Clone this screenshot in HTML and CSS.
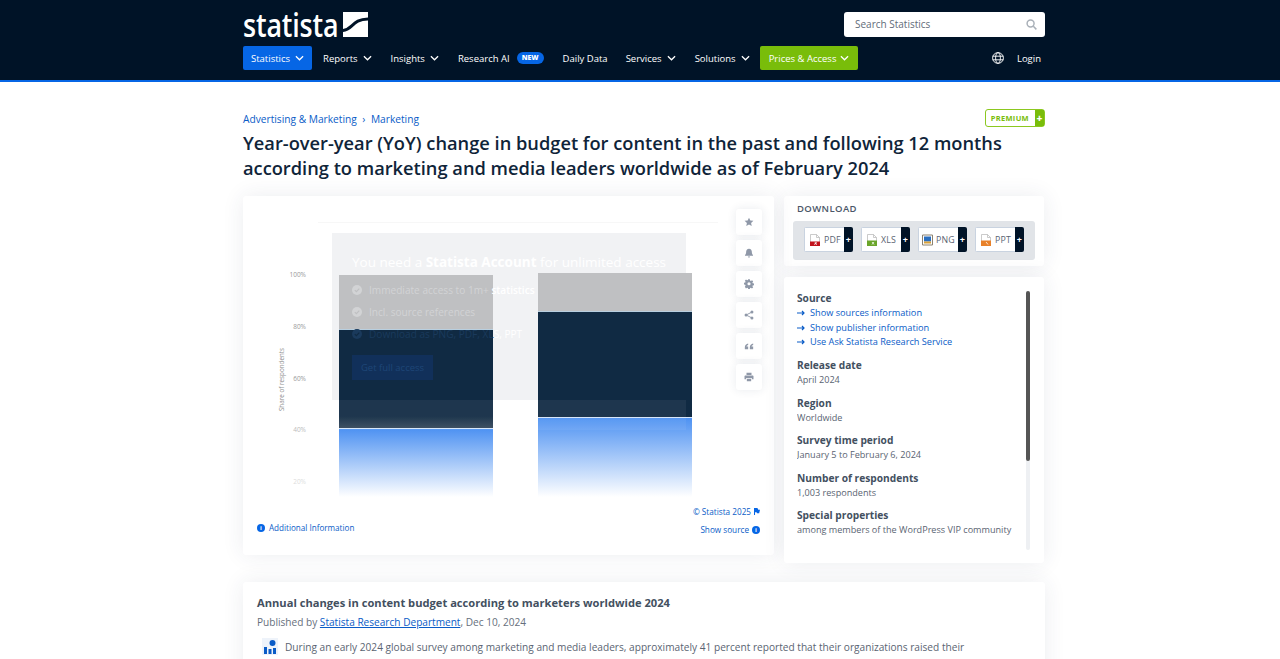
FILE: index.html
```html
<!DOCTYPE html>
<html lang="en">
<head>
    <meta charset="UTF-8">
    <title>Statista</title>
    <link rel="stylesheet" href="styles.css">
</head>
<body>
    <header class="site-header">
        <div class="wrap">
            <div class="header-top">
                <a href="#" class="brand">
                    <span class="brand-name">statista</span>
                    <svg class="brand-mark" width="25" height="25" viewBox="0 0 25 25"><path fill="#fff" d="M0 0h25v25H0z"/><path fill="none" stroke="#001327" stroke-width="3" d="M-1 18.500c11 0 9-11.500 27-11.500"/></svg>
                </a>
                <div class="search">
                    <span>Search Statistics</span>
                    <svg width="11" height="11" viewBox="0 0 12 12" fill="none" stroke="#a9b0b8" stroke-width="1.6"><circle cx="5" cy="5" r="3.8"/><path d="M8 8l3.3 3.3"/></svg>
                </div>
            </div>
            <nav class="main-nav">
                <a href="#" class="nav-link nav-active">Statistics <svg class="chev" viewBox="0 0 10 6"><path d="M1 1l4 4 4-4"/></svg></a>
                <a href="#" class="nav-link">Reports <svg class="chev" viewBox="0 0 10 6"><path d="M1 1l4 4 4-4"/></svg></a>
                <a href="#" class="nav-link">Insights <svg class="chev" viewBox="0 0 10 6"><path d="M1 1l4 4 4-4"/></svg></a>
                <a href="#" class="nav-link">Research AI <span class="new-badge">NEW</span></a>
                <a href="#" class="nav-link nav-daily">Daily Data</a>
                <a href="#" class="nav-link">Services <svg class="chev" viewBox="0 0 10 6"><path d="M1 1l4 4 4-4"/></svg></a>
                <a href="#" class="nav-link nav-solutions">Solutions <svg class="chev" viewBox="0 0 10 6"><path d="M1 1l4 4 4-4"/></svg></a>
                <a href="#" class="nav-link nav-prices">Prices &amp; Access <svg class="chev" viewBox="0 0 10 6"><path d="M1 1l4 4 4-4"/></svg></a>
                <div class="nav-right">
                    <svg width="12" height="12" viewBox="0 0 12 12" fill="none" stroke="#fff" stroke-width="0.9"><circle cx="6" cy="6" r="5.400"/><ellipse cx="6" cy="6" rx="2.400" ry="5.400"/><path d="M.6 4.200h10.800M.6 7.800h10.800"/></svg>
                    <a href="#" class="login">Login</a>
                </div>
            </nav>
        </div>
    </header>

    <main class="wrap">
        <div class="crumb-row">
            <div class="crumbs"><a href="#">Advertising &amp; Marketing</a><span class="sep">›</span><a href="#">Marketing</a></div>
            <div class="premium"><span>PREMIUM</span><b>+</b></div>
        </div>
        <h1>Year-over-year (YoY) change in budget for content in the past and following 12 months according to marketing and media leaders worldwide as of February 2024</h1>

        <div class="columns">
            <section class="card chart-card">
                <div class="chart">
                    <div class="hairline"></div>
                    <div class="paywall"></div>

                    <span class="tick tick-100">100%</span>
                    <span class="tick tick-80">80%</span>
                    <span class="tick tick-60">60%</span>
                    <span class="tick tick-40">40%</span>
                    <span class="tick tick-20">20%</span>
                    <span class="axis-title">Share of respondents</span>

                    <div class="bar bar-left">
                        <div class="seg-grey seg-grey-left"></div>
                        <div class="seg-dark seg-dark-left"></div>
                        <div class="seg-blue seg-blue-left"></div>
                    </div>
                    <div class="bar bar-right">
                        <div class="seg-grey seg-grey-right"></div>
                        <div class="seg-dark seg-dark-right"></div>
                        <div class="seg-blue seg-blue-right"></div>
                    </div>
                    <div class="paywall-strip"></div>

                    <div class="paywall-text">
                        <p class="pw-title">You need a <b>Statista Account</b> for unlimited access</p>
                        <p class="pw-item"><svg class="pw-check" viewBox="0 0 10 10"><circle cx="5" cy="5" r="5"/><path d="M2.800 5.100l1.600 1.600 2.900-3"/></svg><span>Immediate access to 1m+ <b>statistics</b></span></p>
                        <p class="pw-item"><svg class="pw-check" viewBox="0 0 10 10"><circle cx="5" cy="5" r="5"/><path d="M2.800 5.100l1.600 1.600 2.900-3"/></svg><span>Incl. source references</span></p>
                        <p class="pw-item pw-item-dark"><svg class="pw-check" viewBox="0 0 10 10"><circle cx="5" cy="5" r="5"/><path d="M2.800 5.100l1.600 1.600 2.900-3"/></svg><span>Download as PNG, PDF, XL<em>S, PPT</em></span></p>
                        <span class="pw-btn">Get full access</span>
                    </div>

                    <div class="tools">
                        <span class="tool"><svg viewBox="0 0 12 12"><path d="M6 .8l1.600 3.400 3.700.4-2.800 2.500.8 3.700L6 9l-3.300 1.800.8-3.700L.7 4.600l3.700-.4z"/></svg></span>
                        <span class="tool"><svg viewBox="0 0 12 12"><path d="M6 .8c2.300 0 3.400 1.700 3.400 3.800 0 2 .5 3 1.400 3.900v.8H1.200v-.8c.9-.9 1.400-1.900 1.400-3.900C2.600 2.500 3.700.8 6 .8zM4.700 10.200h2.600c0 .7-.6 1.200-1.300 1.200s-1.300-.5-1.300-1.200z"/></svg></span>
                        <span class="tool"><svg viewBox="0 0 12 12"><path fill-rule="evenodd" d="M5 .3h2l.3 1.600 1 .4 1.300-.9L11 2.800l-.9 1.300.4 1 1.600.3v2l-1.600.3-.4 1 .9 1.300-1.400 1.400-1.300-.9-1 .4-.3 1.600H5l-.3-1.600-1-.4-1.300.9L1 9.200l.9-1.300-.4-1L-.1 6.600v-2l1.600-.3.4-1L1 2l1.400-1.400 1.300.9 1-.4zM6 3.800a1.900 1.900 0 100 3.800 1.900 1.900 0 000-3.800z"/></svg></span>
                        <span class="tool"><svg viewBox="0 0 12 12"><circle cx="9.500" cy="2.500" r="1.800"/><circle cx="2.500" cy="6" r="1.800"/><circle cx="9.500" cy="9.500" r="1.800"/><path d="M9.500 2.500L2.500 6l7 3.500" fill="none" stroke="#8f98a8" stroke-width="1.100"/></svg></span>
                        <span class="tool"><svg viewBox="0 0 12 12"><path d="M5 3C2.800 3.500 1 5 1 7.200V10h4V6.500H3C3.200 5.500 4 5 5 4.700zM11 3C8.800 3.500 7 5 7 7.200V10h4V6.500H9c.2-1 1-1.500 2-1.800z"/></svg></span>
                        <span class="tool"><svg viewBox="0 0 12 12"><path fill-rule="evenodd" d="M3 .8h6v2.800H3zM1.800 4.300h8.400c.7 0 1.200.5 1.200 1.200v3.300H9.400V7.200H2.600v1.600H.6V5.500c0-.7.500-1.200 1.200-1.200zM3.400 8h5.200v3.200H3.400z"/></svg></span>
                    </div>
                </div>
                <div class="chart-foot">
                    <a href="#" class="foot-link foot-info"><span class="info-dot">i</span>Additional Information</a>
                    <div class="foot-right">
                        <a href="#" class="foot-link">© Statista 2025 <svg class="flag" width="6" height="7" viewBox="0 0 7 8"><path fill="#0666e5" d="M0 0h4l1 2h2L6 6H3.500L3 5H1.200v3H0z"/></svg></a>
                        <a href="#" class="foot-link">Show source <span class="info-dot">i</span></a>
                    </div>
                </div>
            </section>

            <aside class="side">
                <section class="card download">
                    <h2 class="download-title">DOWNLOAD</h2>
                    <div class="download-row">
                        <a class="dl-btn" href="#"><span class="dl-main"><svg class="file" viewBox="0 0 10 12"><path fill="#fff" stroke="#b5b5b5" stroke-width=".7" d="M.5.5h6l3 3v8h-9zM6.500.5v3h3"/><path fill="#c1121c" d="M0 7.500h10V12H0z"/><path fill="none" stroke="#fff" stroke-width=".8" d="M5 8l1.500 3M7 8.500l-3 2"/></svg>PDF</span><b>+</b></a>
                        <a class="dl-btn" href="#"><span class="dl-main"><svg class="file" viewBox="0 0 10 12"><path fill="#fff" stroke="#b5b5b5" stroke-width=".7" d="M.5.5h6l3 3v8h-9zM6.500.5v3h3"/><path fill="#6aa52a" d="M0 6.500h10V12H0z"/><path fill="none" stroke="#fff" stroke-width=".8" d="M5 8l2 2.500M7 8l-2 2.500"/></svg>XLS</span><b>+</b></a>
                        <a class="dl-btn" href="#"><span class="dl-main dl-main-tight"><svg class="file file-wide" viewBox="0 0 11 11"><path fill="#fff" stroke="#8a8170" d="M.5.5h10v10H.5z"/><path fill="#2a6fc0" d="M2 2h7v5H2z"/><path fill="#d9a23a" d="M2 7h7v2H2z"/></svg>PNG</span><b>+</b></a>
                        <a class="dl-btn" href="#"><span class="dl-main"><svg class="file" viewBox="0 0 10 12"><path fill="#fff" stroke="#b5b5b5" stroke-width=".7" d="M.5.5h6l3 3v8h-9zM6.500.5v3h3"/><path fill="#e8812a" d="M0 6.500h10V12H0z"/><path fill="none" stroke="#fff" stroke-width=".8" d="M5 8l2 2.500"/></svg>PPT</span><b>+</b></a>
                    </div>
                </section>
                <section class="card details">
                    <div class="details-scroll">
                        <div class="info">
                            <h3>Source</h3>
                            <a href="#" class="arrow-link"><svg width="8" height="6" viewBox="0 0 8 6"><path fill="none" stroke="#0a5cc7" stroke-width="1.200" d="M0 3h7M5 1l2 2-2 2"/></svg>Show sources information</a>
                            <a href="#" class="arrow-link"><svg width="8" height="6" viewBox="0 0 8 6"><path fill="none" stroke="#0a5cc7" stroke-width="1.200" d="M0 3h7M5 1l2 2-2 2"/></svg>Show publisher information</a>
                            <a href="#" class="arrow-link"><svg width="8" height="6" viewBox="0 0 8 6"><path fill="none" stroke="#0a5cc7" stroke-width="1.200" d="M0 3h7M5 1l2 2-2 2"/></svg>Use Ask Statista Research Service</a>
                        </div>
                        <div class="info"><h3>Release date</h3><p>April 2024</p></div>
                        <div class="info"><h3>Region</h3><p>Worldwide</p></div>
                        <div class="info"><h3>Survey time period</h3><p>January 5 to February 6, 2024</p></div>
                        <div class="info"><h3>Number of respondents</h3><p>1,003 respondents</p></div>
                        <div class="info"><h3>Special properties</h3><p>among members of the WordPress VIP community</p></div>
                        <div class="info"><h3>Method of interview</h3></div>
                    </div>
                    <div class="scrollbar"><div class="scroll-thumb"></div></div>
                </section>
            </aside>
        </div>

        <section class="card article">
            <h2>Annual changes in content budget according to marketers worldwide 2024</h2>
            <p class="byline">Published by <a href="#">Statista Research Department</a>, Dec 10, 2024</p>
            <div class="lead">
                <span class="lead-icon"><svg width="12" height="14" viewBox="0 0 12 14"><path fill="#0a5cc7" d="M0 7h3v7H0zM4.500 9h3v5h-3zM9 8h3v6H9z"/><circle cx="8.500" cy="3" r="3" fill="#0a5cc7"/></svg></span>
                <p>During an early 2024 global survey among marketing and media leaders, approximately 41 percent reported that their organizations raised their</p>
            </div>
        </section>
    </main>
</body>
</html>
```

FILE: styles.css
```css
body {
    margin: 0;
    font-family: "Open Sans", Arial, sans-serif;
    background-color: #fff;
    color: #444f5f;
    height: 659px;
    overflow: hidden;
}

a {
    color: #0a5cc7;
    text-decoration: none;
}

.wrap {
    width: 802px;
    margin-left: 243px;
}

.site-header {
    height: 80px;
    background-color: #001327;
    border-bottom: 2px solid #0666e5;
}

.header-top {
    display: flex;
    justify-content: space-between;
    align-items: flex-start;
    height: 46px;
}

.brand {
    display: flex;
    align-items: flex-start;
    padding-top: 12px;
}

.brand-name {
    width: 100px;
    color: #fff;
    font-size: 32px;
    line-height: 26px;
    font-weight: 600;
    letter-spacing: -0.2px;
    transform: scaleX(0.84);
    transform-origin: left top;
}

.brand-mark {
    display: block;
}

.search {
    display: flex;
    justify-content: space-between;
    align-items: center;
    box-sizing: border-box;
    width: 201px;
    height: 25px;
    margin-top: 12px;
    padding: 0 8px 1px 11px;
    background-color: #fff;
    border-radius: 3px;
    font-size: 10px;
    color: #5f6b79;
}

.main-nav {
    display: flex;
    align-items: center;
    height: 24px;
}

.nav-link {
    display: flex;
    align-items: center;
    gap: 5px;
    height: 24px;
    margin-right: 19px;
    color: #fff;
    font-size: 9.500px;
    white-space: nowrap;
}

.nav-active {
    padding: 0 8px;
    margin-right: 11px;
    background-color: #0666e5;
    border-radius: 2px;
}

.nav-daily {
    margin-right: 18px;
}

.nav-solutions {
    margin-right: 10px;
}

.nav-prices {
    gap: 4px;
    padding: 0 9px;
    margin-right: 0;
    background-color: #79bd0a;
    border-radius: 2px;
}

.chev {
    width: 9px;
    height: 6px;
    fill: none;
    stroke: #fff;
    stroke-width: 1.400;
}

.new-badge {
    margin-left: 2px;
    padding: 0 5px;
    height: 12px;
    line-height: 12px;
    border-radius: 7px;
    background-color: #0666e5;
    font-size: 7px;
    font-weight: 800;
}

.nav-right {
    display: flex;
    align-items: center;
    gap: 13px;
    margin-left: auto;
    padding-right: 4px;
}

.login {
    color: #fff;
    font-size: 9.500px;
}

.crumb-row {
    display: flex;
    justify-content: space-between;
    align-items: flex-start;
    padding-top: 27px;
    height: 21px;
}

.crumbs {
    font-size: 10.200px;
    line-height: 20px;
}

.crumbs .sep {
    margin: 0 5.500px;
    color: #0a5cc7;
}

.premium {
    display: flex;
    height: 18px;
    box-sizing: border-box;
    border: 1px solid #8cc820;
    border-radius: 3px;
    font-size: 7.500px;
    font-weight: 700;
    color: #79bd0a;
    letter-spacing: 0.3px;
    line-height: 16px;
}

.premium span {
    padding: 0 6px 0 5px;
}

.premium b {
    width: 9px;
    background-color: #79bd0a;
    color: #fff;
    text-align: center;
    font-size: 10px;
}

h1 {
    margin: 0 0 16px;
    font-size: 18.250px;
    line-height: 25px;
    font-weight: 600;
    color: #0f2439;
}

.columns {
    display: flex;
    gap: 10px;
    align-items: flex-start;
}

.card {
    background-color: #fff;
    border-radius: 3px;
    box-shadow: 0 0 22px rgba(40, 60, 90, 0.09);
}

.chart-card {
    position: relative;
    width: 531px;
    height: 359px;
}

.chart {
    position: relative;
    height: 310px;
    overflow: hidden;
}

.hairline {
    position: absolute;
    left: 75px;
    top: 26px;
    width: 400px;
    height: 1px;
    background-color: #f7f7f7;
}

.paywall {
    position: absolute;
    left: 89px;
    top: 37px;
    width: 354px;
    height: 167px;
    background-color: #f1f2f4;
}

.paywall-strip {
    position: absolute;
    left: 89px;
    top: 204px;
    width: 354px;
    height: 30px;
    background-color: rgba(255, 255, 255, 0.06);
}

.tick {
    position: absolute;
    width: 28px;
    text-align: right;
    font-size: 6.500px;
    color: #9a9a9a;
}

.tick-100 { left: 35px; top: 74px; }
.tick-80 { left: 35px; top: 126px; }
.tick-60 { left: 35px; top: 178px; }
.tick-40 { left: 35px; top: 229px; color: #bbb; }
.tick-20 { left: 35px; top: 281px; color: #ddd; }

.axis-title {
    position: absolute;
    left: 3px;
    top: 179px;
    width: 70px;
    text-align: center;
    font-size: 6.300px;
    color: #8f8f8f;
    transform: rotate(-90deg);
}

.bar {
    position: absolute;
    width: 154px;
    bottom: 9px;
    display: flex;
    flex-direction: column;
}

.bar-left { left: 96px; }
.bar-right { left: 295px; }

.seg-grey { background-color: #bfc0c2; }
.seg-dark {
    background-color: #102a43;
    border-top: 1px solid #b8cfe0;
    box-sizing: border-box;
}
.seg-blue {
    background: linear-gradient(#4e92f2, #fff);
    border-top: 1px solid #d6e6fa;
    box-sizing: border-box;
}

.seg-grey-left { height: 54px; }
.seg-dark-left { height: 99px; background: linear-gradient(#102a43 88%, #33465a); }
.seg-blue-left { height: 69px; }
.seg-grey-right { height: 38px; }
.seg-dark-right { height: 106px; }
.seg-blue-right { height: 80px; }

.paywall-text {
    position: absolute;
    left: 109px;
    top: 57px;
}

.paywall-text p {
    margin: 0;
    white-space: nowrap;
}

.paywall-text .pw-title {
    font-size: 13.500px;
    line-height: 18px;
    color: #fff;
    margin-bottom: 8px;
}

.pw-item {
    display: flex;
    align-items: center;
    gap: 7px;
    height: 22px;
    font-size: 10.100px;
    color: #d2d3d5;
}

.pw-item b {
    font-weight: 600;
    color: #fff;
}

.pw-check {
    width: 10px;
    height: 10px;
    flex-shrink: 0;
    fill: #d2d3d5;
}

.pw-check path {
    fill: none;
    stroke: #bfc0c2;
    stroke-width: 1.200;
}

.pw-item-dark {
    color: #1a3a5c;
}

.pw-item-dark .pw-check {
    fill: #1a3a5c;
}

.pw-item-dark .pw-check path {
    stroke: #102a43;
}

.pw-item-dark em {
    font-style: normal;
    color: #fff;
}

.pw-btn {
    display: block;
    width: 81px;
    height: 25px;
    margin-top: 10px;
    background-color: #11305a;
    color: #1e4677;
    font-size: 9.500px;
    line-height: 25px;
    text-align: center;
}

.tools {
    position: absolute;
    left: 493px;
    top: 13px;
    display: flex;
    flex-direction: column;
    gap: 5px;
}

.tool {
    display: flex;
    align-items: center;
    justify-content: center;
    width: 26px;
    height: 26px;
    background-color: #fff;
    border-radius: 3px;
    box-shadow: 0 0 10px rgba(40, 60, 90, 0.1);
}

.tool svg {
    width: 10px;
    height: 10px;
    fill: #8f98a8;
}

.chart-foot {
    display: flex;
    justify-content: space-between;
    align-items: flex-end;
    padding: 0 14px;
}

.foot-right {
    display: flex;
    flex-direction: column;
    align-items: flex-end;
    gap: 7px;
}

.foot-link {
    display: flex;
    align-items: center;
    gap: 3px;
    font-size: 8.200px;
    line-height: 11px;
    color: #0a5cc7;
}

.foot-info {
    gap: 4px;
    margin-bottom: 2px;
    font-size: 8.100px;
}

.info-dot {
    display: inline-block;
    width: 8px;
    height: 8px;
    border-radius: 50%;
    background-color: #0666e5;
    color: #fff;
    font-size: 6px;
    line-height: 8px;
    font-weight: 700;
    text-align: center;
}

.side {
    display: flex;
    flex-direction: column;
    gap: 11px;
    width: 260px;
}

.download {
    height: 70px;
    box-sizing: border-box;
    padding: 6px 9px 0;
}

.download-title {
    margin: 0 0 6px 4px;
    font-size: 9.500px;
    line-height: 13px;
    font-weight: 600;
    letter-spacing: 0.4px;
    color: #4b5768;
}

.download-row {
    display: flex;
    gap: 8px;
    height: 39px;
    box-sizing: border-box;
    padding: 6px 0 0 11px;
    background-color: #e1e4e8;
    border-radius: 3px;
}

.dl-btn {
    display: flex;
    width: 49px;
    height: 25px;
    box-sizing: border-box;
    border-radius: 2px;
    overflow: hidden;
    color: #5a6472;
    font-size: 8.800px;
    letter-spacing: 0.2px;
}

.dl-main {
    display: flex;
    align-items: center;
    gap: 4px;
    flex: 1;
    padding-left: 5px;
    background-color: #fff;
    border: 1px solid #c9d3e0;
    border-right: 0;
}

.dl-main-tight {
    gap: 3px;
    padding-left: 3px;
}

.dl-btn b {
    width: 9px;
    flex-shrink: 0;
    background-color: #001327;
    color: #fff;
    text-align: center;
    line-height: 25px;
    font-size: 9px;
}

.file {
    width: 10px;
    height: 12px;
    flex-shrink: 0;
}

.file-wide {
    width: 11px;
}

.details {
    position: relative;
    height: 286px;
    box-sizing: border-box;
    padding: 14px 0 13px 13px;
}

.details-scroll {
    height: 258px;
    overflow: hidden;
}

.info {
    margin-bottom: 8.500px;
}

.info h3 {
    margin: 0;
    font-size: 10.200px;
    line-height: 15px;
    font-weight: 700;
    color: #43505f;
}

.info p {
    margin: 0;
    font-size: 9.100px;
    line-height: 14px;
    color: #5a6472;
}

.arrow-link {
    display: flex;
    align-items: center;
    gap: 5px;
    font-size: 9.200px;
    line-height: 14.500px;
}

.scrollbar {
    position: absolute;
    right: 14px;
    top: 14px;
    width: 4px;
    height: 259px;
    background-color: #eef0f3;
    border-radius: 2px;
}

.scroll-thumb {
    height: 170px;
    background-color: #555;
    border-radius: 2px;
}

.article {
    margin-top: 19px;
    padding: 13px 14px 0;
    height: 100px;
}

.article h2 {
    margin: 0 0 3px;
    font-size: 11.150px;
    line-height: 16px;
    font-weight: 700;
    color: #43505f;
}

.byline {
    margin: 0 0 8px;
    font-size: 10.100px;
    line-height: 16px;
    color: #666f7c;
}

.byline a {
    text-decoration: underline;
}

.lead {
    display: flex;
    align-items: flex-start;
    gap: 7px;
    padding-left: 5px;
}

.lead-icon {
    display: flex;
    align-items: center;
    justify-content: center;
    width: 16px;
    height: 17px;
    background-color: #eef3fa;
}

.lead p {
    margin: 1px 0 0;
    font-size: 10.150px;
    line-height: 16px;
    white-space: nowrap;
    color: #5a6472;
}
```
